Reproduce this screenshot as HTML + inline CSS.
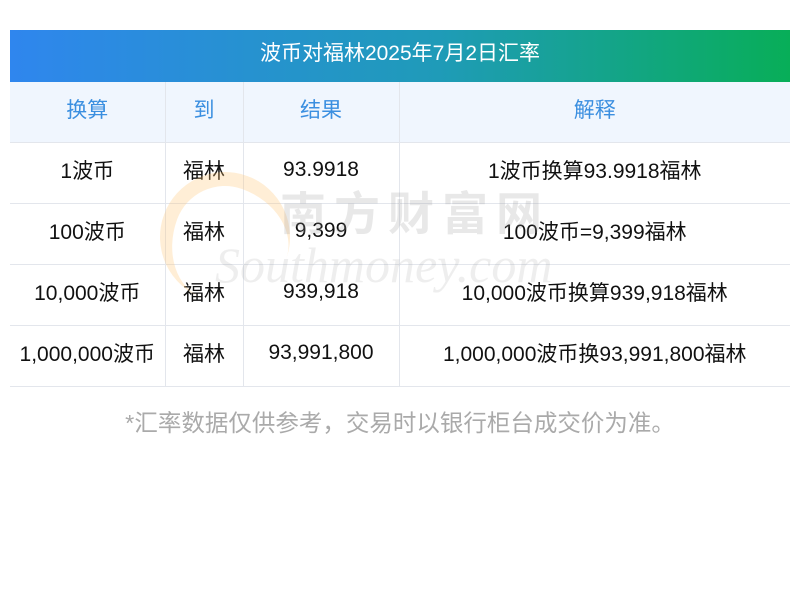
<!DOCTYPE html>
<html><head><meta charset="utf-8"><style>
body{margin:0;width:800px;height:600px;background:#fff;font-family:"Liberation Sans","Noto Sans CJK SC",sans-serif;position:relative;overflow:hidden}
.title{position:absolute;left:10px;top:30px;width:780px;height:52px;background:linear-gradient(90deg,#2f86ee,#1f9bb8 55%,#08ae58);color:#fff;font-size:21px;line-height:48px;text-align:center}
table{position:absolute;left:10px;top:82px;width:780px;border-collapse:collapse;table-layout:fixed}
td{height:54px;border:1px solid #e3e6ec;text-align:center;font-size:21px;color:#111;padding:0 0 6px 0}
tr:first-child td{background:#f0f6fe;color:#3b8fe0;border-top:none}
td:first-child{border-left:none}td:last-child{border-right:none}
.note{position:absolute;top:404px;left:0;width:800px;text-align:center;color:#aaa;font-size:23.5px}
.wm{position:absolute;color:rgba(150,150,150,.22);font-size:46px;font-weight:bold;letter-spacing:8px;left:280px;top:178px}
.wm2{position:absolute;color:rgba(150,150,150,.16);font-size:50px;font-style:italic;left:215px;top:236px;font-family:"Liberation Serif",serif}
.arc{position:absolute;left:160px;top:172px;width:130px;height:130px;border-radius:50%;border-left:14px solid rgba(255,200,120,.3);border-top:14px solid rgba(255,200,120,.3);box-sizing:border-box;transform:rotate(20deg)}
</style></head><body>
<div class="title">波币对福林2025年7月2日汇率</div>
<table>
<colgroup><col style="width:155px"><col style="width:78px"><col style="width:156px"><col></colgroup>
<tr><td>换算</td><td>到</td><td>结果</td><td>解释</td></tr>
<tr><td>1波币</td><td>福林</td><td>93.9918</td><td>1波币换算93.9918福林</td></tr>
<tr><td>100波币</td><td>福林</td><td>9,399</td><td>100波币=9,399福林</td></tr>
<tr><td>10,000波币</td><td>福林</td><td>939,918</td><td>10,000波币换算939,918福林</td></tr>
<tr><td>1,000,000波币</td><td>福林</td><td>93,991,800</td><td>1,000,000波币换93,991,800福林</td></tr>
</table>
<div class="arc"></div>
<div class="wm">南方财富网</div>
<div class="wm2">Southmoney.com</div>
<div class="note">*汇率数据仅供参考，交易时以银行柜台成交价为准。</div>
</body></html>
